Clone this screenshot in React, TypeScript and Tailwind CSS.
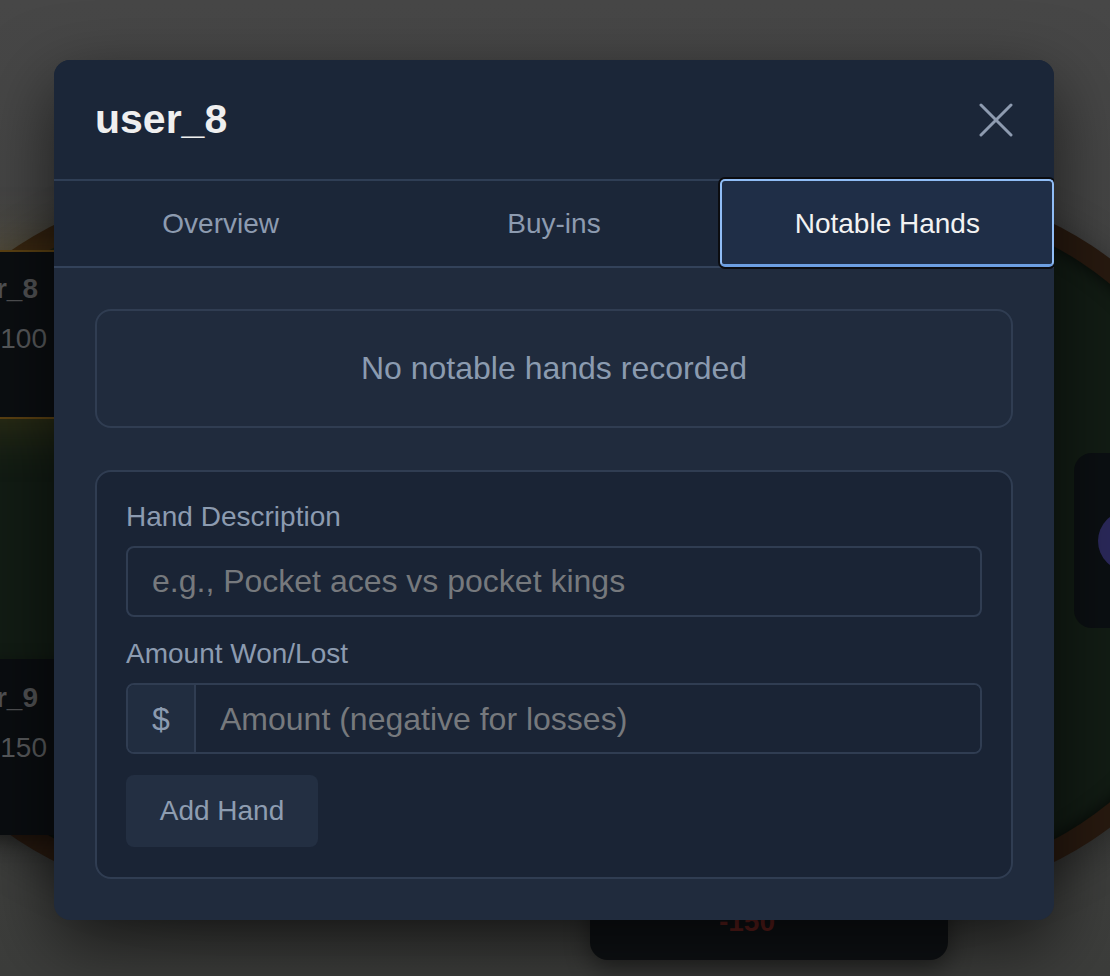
import { useState } from "react";

const tabs = ["Overview", "Buy-ins", "Notable Hands"];

export default function App() {
  const [active, setActive] = useState(2);
  const [desc, setDesc] = useState("");
  const [amount, setAmount] = useState("");

  return (
    <div className="relative w-[1110px] h-[976px] overflow-hidden bg-gradient-to-b from-[#474747] to-[#3c3d3b] font-['Liberation_Sans',Arial,sans-serif]">
      {/* table behind the dialog */}
      <div className="absolute left-[-143px] top-[185px] w-[1396px] h-[716px] rounded-[364px/358px] bg-[#27190f] p-[20px] shadow-[0_10px_40px_rgba(0,0,0,0.35)]">
        <div className="w-full h-full rounded-[344px/338px] bg-[#121c14] shadow-[inset_0_0_18px_rgba(0,0,0,0.75)]" />
      </div>

      {/* seats */}
      <div className="absolute left-[-200px] top-[250px] w-[360px] h-[169px] rounded-[18px] border-2 border-[#5a4012] bg-[#0b0e11] pt-[16px] text-right shadow-[0_0_60px_rgba(170,130,30,0.28)]">
        <div className="pr-[120px] text-[28px] leading-[42px] font-bold text-[#505153]">user_8</div>
        <div className="mt-[8px] pr-[111px] text-[28px] leading-[42px] text-[#57595b]">100</div>
      </div>
      <div className="absolute left-[-200px] top-[659px] w-[360px] h-[176px] rounded-[18px] bg-[#0a0d10] pt-[18px] text-right shadow-[0_6px_20px_rgba(0,0,0,0.4)]">
        <div className="pr-[122px] text-[28px] leading-[42px] font-bold text-[#505153]">user_9</div>
        <div className="mt-[8px] pr-[113px] text-[28px] leading-[42px] text-[#57595b]">150</div>
      </div>
      <div className="absolute left-[590px] top-[770px] w-[358px] h-[190px] rounded-[18px] bg-[#0e1114] flex flex-col justify-end items-center pb-[17px] pr-[44px] shadow-[0_8px_24px_rgba(0,0,0,0.45)]">
        <div className="text-[28px] leading-[42px] font-bold text-[#505153]">user_1</div>
        <div className="mt-[8px] text-[28px] leading-[42px] font-bold text-[#5c1e1b]">-150</div>
      </div>
      <div className="absolute left-[1074px] top-[453px] w-[300px] h-[175px] rounded-[18px] bg-[#0b0f12] flex items-center pl-[24px]">
        <div className="w-[60px] h-[60px] rounded-full bg-[#2a2859]" />
      </div>

      {/* dialog */}
      <div className="absolute inset-0 flex justify-center items-start pt-[60px] pr-[2px]">
        <div className="w-[1000px] rounded-2xl overflow-hidden bg-[#202b3d] shadow-[0_24px_70px_rgba(0,0,0,0.6)]">
          <div className="h-[121px] flex items-center justify-between px-[41px] bg-[#1b2638] border-b-2 border-[#2f3e55]">
            <h2 className="text-[41px] font-bold text-[#efefef] leading-none">user_8</h2>
            <button className="text-[#8e9bb0]">
              <svg width="34" height="34" viewBox="0 0 34 34" fill="none" stroke="currentColor" strokeWidth="3" strokeLinecap="round">
                <path d="M2 2 32 32M32 2 2 32" />
              </svg>
            </button>
          </div>

          <div className="h-[87px] flex bg-[#1b2638] border-b-2 border-[#33425a]">
            {tabs.map((t, i) => (
              <button
                key={t}
                onClick={() => setActive(i)}
                className={
                  i === active
                    ? "relative flex-1 flex items-center justify-center text-[28px] text-[#f2f2f2]"
                    : "relative flex-1 flex items-center justify-center text-[28px] text-[#8d9bb0]"
                }
              >
                {i === active && (
                  <span className="absolute -top-[2px] -bottom-[1px] -left-px right-0 rounded-[5px] bg-[#1f2e47] border-2 border-[#90bdf6] border-b-[3px] border-b-[#6d9fe2] shadow-[0_0_0_2px_#0b0c10]" />
                )}
                <span className="relative">{t}</span>
              </button>
            ))}
          </div>

          <div className="px-[41px] pt-[41px] pb-[41px]">
            <div className="rounded-2xl border-2 border-[#303d52] pt-[33px] pb-[34px] text-center text-[32px] leading-[48px] text-[#8b9bb0]">
              No notable hands recorded
            </div>

            <div className="mt-[42px] rounded-2xl border-2 border-[#303d52] bg-[#1a2435] px-[29px] pt-[24px] pb-[30px]">
              <label className="block text-[28px] leading-[42px] text-[#8c9bb0]">Hand Description</label>
              <input
                value={desc}
                onChange={(e) => setDesc(e.target.value)}
                placeholder="e.g., Pocket aces vs pocket kings"
                className="mt-[8px] block w-full h-[71px] rounded-lg border-2 border-[#303d52] bg-[#1a2435] px-[24px] text-[32px] text-[#cbd5e1] placeholder:text-[#76797d] outline-none"
              />

              <label className="mt-[16px] block text-[28px] leading-[42px] text-[#8c9bb0]">Amount Won/Lost</label>
              <div className="mt-[8px] flex h-[71px] rounded-lg border-2 border-[#303d52] overflow-hidden">
                <span className="w-[68px] flex items-center justify-center bg-[#212d40] border-r-2 border-[#303d52] text-[32px] text-[#8c9bb0]">$</span>
                <input
                  value={amount}
                  onChange={(e) => setAmount(e.target.value)}
                  placeholder="Amount (negative for losses)"
                  className="flex-1 min-w-0 bg-[#1a2435] px-[24px] text-[32px] text-[#cbd5e1] placeholder:text-[#76797d] outline-none"
                />
              </div>

              <button className="mt-[21px] h-[72px] w-[192px] rounded-lg bg-[#232f42] text-[28px] text-[#8e9db1]">
                Add Hand
              </button>
            </div>
          </div>
        </div>
      </div>
    </div>
  );
}
